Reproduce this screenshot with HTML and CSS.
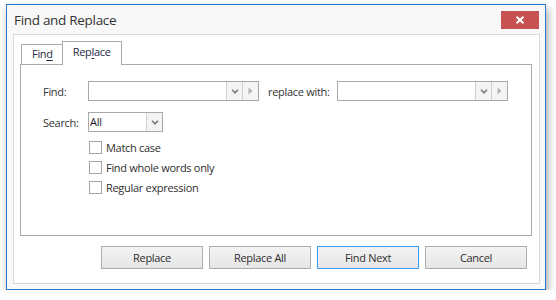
FILE: index.html
```html
<!DOCTYPE html>
<html>
<head>
<meta charset="utf-8">
<link rel="stylesheet" href="styles.css">
</head>
<body>
<div class="window">
  <div class="titlebar">
    <span class="title">Find and Replace</span>
    <button class="close" aria-label="Close">
      <svg width="10" height="8" viewBox="0 0 10 8"><path d="M1.5 0.8 L8.5 7.2 M8.5 0.8 L1.5 7.2" stroke="#fff" stroke-width="2" fill="none"/></svg>
    </button>
  </div>
  <div class="client">
    <div class="tabs">
      <div class="tab">Fin<u>d</u></div>
      <div class="tab active">Rep<u>l</u>ace</div>
    </div>
    <div class="page">
      <div class="row first">
        <span class="label">Find:</span>
        <div class="combo wide">
          <div class="combo-text"></div>
          <div class="dd"><svg width="8" height="5" viewBox="0 0 8 5"><path d="M1 0.8 L4 3.8 L7 0.8" stroke="#7a7a7a" stroke-width="1.6" fill="none"/></svg></div>
          <div class="arr"><svg width="5" height="8" viewBox="0 0 5 8"><path d="M0.5 0.5 L4.5 4 L0.5 7.5 Z" fill="#b0b0b0"/></svg></div>
        </div>
        <span class="label repl">replace with:</span>
        <div class="combo wide">
          <div class="combo-text"></div>
          <div class="dd"><svg width="8" height="5" viewBox="0 0 8 5"><path d="M1 0.8 L4 3.8 L7 0.8" stroke="#7a7a7a" stroke-width="1.6" fill="none"/></svg></div>
          <div class="arr"><svg width="5" height="8" viewBox="0 0 5 8"><path d="M0.5 0.5 L4.5 4 L0.5 7.5 Z" fill="#b0b0b0"/></svg></div>
        </div>
      </div>
      <div class="row second">
        <span class="label">Search:</span>
        <div class="combo narrow">
          <div class="combo-text">All</div>
          <div class="dd"><svg width="8" height="5" viewBox="0 0 8 5"><path d="M1 0.8 L4 3.8 L7 0.8" stroke="#7a7a7a" stroke-width="1.6" fill="none"/></svg></div>
        </div>
      </div>
      <div class="checks">
        <div class="check"><span class="box"></span><span>Match case</span></div>
        <div class="check"><span class="box"></span><span>Find whole words only</span></div>
        <div class="check"><span class="box"></span><span>Regular expression</span></div>
      </div>
    </div>
    <div class="buttons">
      <button class="btn">Replace</button>
      <button class="btn">Replace All</button>
      <button class="btn default">Find Next</button>
      <button class="btn">Cancel</button>
    </div>
  </div>
</div>
</body>
</html>
```
FILE: styles.css
```css
* { box-sizing: border-box; }
html, body { margin: 0; padding: 0; background: #fff; }
body {
  font-family: "Open Sans", "Noto Sans", sans-serif;
  font-size: 11px;
  letter-spacing: -0.3px;
  color: #2e2e2e;
}
.window {
  width: 540px;
  height: 286px;
  margin: 4px 0 0 6px;
  border: 1px solid #2a78d0;
  background: #f8f8f8;
  box-shadow: 2px 4px 8px rgba(0,0,0,0.35);
  display: flex;
  flex-direction: column;
  padding: 0 5px 5px 6px;
}
.titlebar {
  height: 29px;
  display: flex;
  align-items: flex-start;
  flex: none;
}
.title {
  margin-left: 1px;
  margin-top: 5px;
  font-size: 13.5px;
  line-height: 20px;
  letter-spacing: -0.3px;
  color: #333;
}
.close {
  margin-left: auto;
  margin-right: 1px;
  margin-top: 6px;
  width: 38px;
  height: 18px;
  border: 0;
  padding: 0;
  background: #c75050;
  display: flex;
  align-items: center;
  justify-content: center;
}
.close svg { display: block; }
.client {
  flex: 1;
  border: 1px solid #d9d9d9;
  background: #fff;
  padding: 6px 7px 0 6px;
  display: flex;
  flex-direction: column;
}
.tabs {
  height: 23px;
  display: flex;
  align-items: flex-end;
  padding-left: 1px;
  flex: none;
}
.tab {
  height: 20px;
  padding: 0 9px 0 10px;
  border: 1px solid #ababab;
  border-bottom: 0;
  border-right: 0;
  background: #fff;
  line-height: 18px;
  color: #1f2a44;
}
.tab.active {
  height: 24px;
  border-right: 1px solid #ababab;
  margin-bottom: -1px;
  position: relative;
  z-index: 1;
  line-height: 20px;
  padding: 0 10px 0 10px;
}
.tab u { text-underline-offset: 2px; }
.page {
  height: 172px;
  border: 1px solid #ababab;
  flex: none;
}
.row {
  display: flex;
  align-items: center;
  height: 20px;
}
.row.first { margin-top: 16px; }
.row.second { margin-top: 11px; }
.label {
  width: 45px;
  margin-left: 22px;
  flex: none;
  color: #333;
}
.label.repl {
  width: 69px;
  margin-left: 9px;
}
.combo {
  height: 20px;
  border: 1px solid #a9a9a9;
  background: #fff;
  display: flex;
  flex: none;
}
.combo.wide { width: 171px; }
.combo.narrow { width: 75px; }
.combo-text {
  flex: 1;
  padding-left: 1px;
  line-height: 18px;
  color: #1a1a2e;
}
.dd, .arr {
  width: 16px;
  flex: none;
  border-left: 1px solid #cfcfcf;
  background: #f4f4f4;
  display: flex;
  align-items: center;
  justify-content: center;
}
.dd svg, .arr svg { display: block; }
.arr { width: 16px; }
.checks {
  margin-top: 5px;
  margin-left: 68px;
  display: flex;
  flex-direction: column;
}
.check {
  height: 20px;
  display: flex;
  align-items: center;
  gap: 4px;
}
.box {
  width: 13px;
  height: 13px;
  border: 1px solid #a6a6a6;
  background: #fff;
  flex: none;
}
.buttons {
  margin-top: 10px;
  margin-right: 5px;
  display: flex;
  justify-content: flex-end;
  gap: 6px;
}
.btn {
  width: 102px;
  height: 23px;
  border: 1px solid #acacac;
  background: linear-gradient(#f3f3f3, #e6e6e6);
  font-family: inherit;
  font-size: 11px;
  letter-spacing: -0.3px;
  color: #2e2e2e;
  padding: 0;
}
.btn.default { border-color: #3c9af5; }
```
